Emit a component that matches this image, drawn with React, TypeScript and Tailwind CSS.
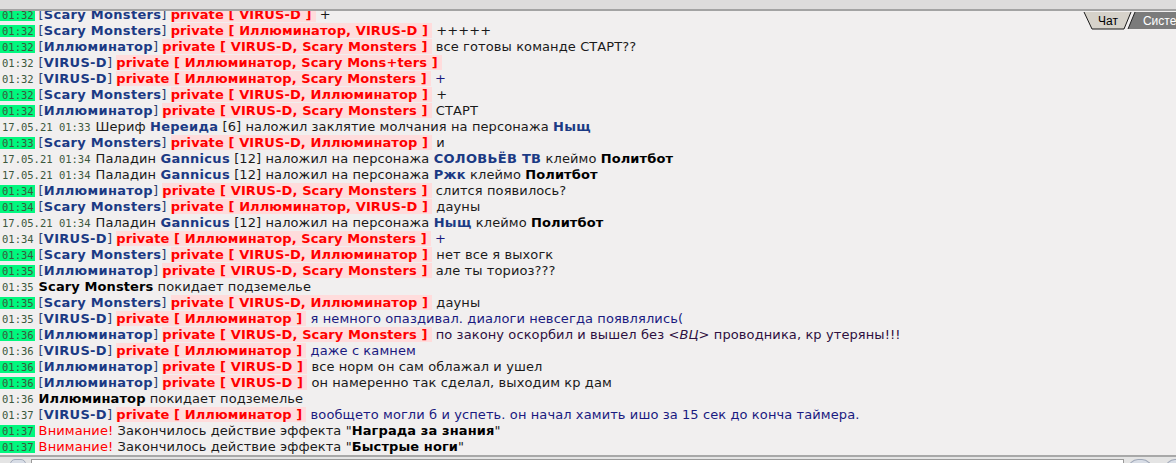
import React from "react";

type Part = { t: string; k?: "name" | "br" | "priv" | "msg" | "navy" | "purple" | "bold" | "red" | "it" | "plain" };
type Row = { time: string; hl?: boolean; date?: boolean; parts: Part[] };

const P = (who: string, to: string, msg: string, hl: boolean, time: string, k: Part["k"] = "msg"): Row => ({
  time,
  hl,
  parts: [
    { t: "[", k: "br" },
    { t: who, k: "name" },
    { t: "]", k: "br" },
    { t: " " },
    { t: `private [ ${to} ]`, k: "priv" },
    { t: " " },
    { t: msg, k },
  ],
});

const SM = "Scary Monsters";
const IL = "Иллюминатор";
const VD = "VIRUS-D";

const rows: Row[] = [
  P(SM, VD, "+", true, "01:32"),
  P(SM, `${IL}, ${VD}`, "+++++", true, "01:32"),
  P(IL, `${VD}, ${SM}`, "все готовы команде СТАРТ??", true, "01:32"),
  P(VD, `${IL}, Scary Mons+ters`, "", false, "01:32", "navy"),
  P(VD, `${IL}, ${SM}`, "+", false, "01:32", "navy"),
  P(SM, `${VD}, ${IL}`, "+", true, "01:32"),
  P(IL, `${VD}, ${SM}`, "СТАРТ", true, "01:32"),
  {
    time: "17.05.21 01:33",
    date: true,
    parts: [
      { t: "Шериф " },
      { t: "Нереида", k: "name" },
      { t: " [6] наложил заклятие молчания на персонажа " },
      { t: "Ныщ", k: "name" },
    ],
  },
  P(SM, `${VD}, ${IL}`, "и", true, "01:33"),
  {
    time: "17.05.21 01:34",
    date: true,
    parts: [
      { t: "Паладин " },
      { t: "Gannicus", k: "name" },
      { t: " [12] наложил на персонажа " },
      { t: "СОЛОВЬЁВ ТВ", k: "name" },
      { t: " клеймо " },
      { t: "Политбот", k: "bold" },
    ],
  },
  {
    time: "17.05.21 01:34",
    date: true,
    parts: [
      { t: "Паладин " },
      { t: "Gannicus", k: "name" },
      { t: " [12] наложил на персонажа " },
      { t: "Ржк", k: "name" },
      { t: " клеймо " },
      { t: "Политбот", k: "bold" },
    ],
  },
  P(IL, `${VD}, ${SM}`, "слится появилось?", true, "01:34"),
  P(SM, `${IL}, ${VD}`, "дауны", true, "01:34"),
  {
    time: "17.05.21 01:34",
    date: true,
    parts: [
      { t: "Паладин " },
      { t: "Gannicus", k: "name" },
      { t: " [12] наложил на персонажа " },
      { t: "Ныщ", k: "name" },
      { t: " клеймо " },
      { t: "Политбот", k: "bold" },
    ],
  },
  P(VD, `${IL}, ${SM}`, "+", false, "01:34", "navy"),
  P(SM, `${VD}, ${IL}`, "нет все я выхогк", true, "01:34"),
  P(IL, `${VD}, ${SM}`, "але ты ториоз???", true, "01:35"),
  { time: "01:35", parts: [{ t: SM, k: "bold" }, { t: " покидает подземелье" }] },
  P(SM, `${VD}, ${IL}`, "дауны", true, "01:35"),
  P(VD, IL, "я немного опаздивал. диалоги невсегда появлялись(", false, "01:35", "navy"),
  {
    time: "01:36",
    hl: true,
    parts: [
      { t: "[", k: "br" },
      { t: IL, k: "name" },
      { t: "]", k: "br" },
      { t: " " },
      { t: `private [ ${VD}, ${SM} ]`, k: "priv" },
      { t: " " },
      { t: "по закону оскорбил и вышел без ", k: "purple" },
      { t: "<ВЦ>", k: "it" },
      { t: " проводника, кр утеряны!!!", k: "purple" },
    ],
  },
  P(VD, IL, "даже с камнем", false, "01:36", "navy"),
  P(IL, VD, "все норм он сам облажал и ушел", true, "01:36"),
  P(IL, VD, "он намеренно так сделал, выходим кр дам", true, "01:36"),
  { time: "01:36", parts: [{ t: IL, k: "bold" }, { t: " покидает подземелье" }] },
  P(VD, IL, "вообщето могли б и успеть. он начал хамить ишо за 15 сек до конча таймера.", false, "01:37", "navy"),
  {
    time: "01:37",
    hl: true,
    parts: [
      { t: "Внимание!", k: "red" },
      { t: " Закончилось действие эффекта \"" },
      { t: "Награда за знания", k: "bold" },
      { t: "\"" },
    ],
  },
  {
    time: "01:37",
    hl: true,
    parts: [
      { t: "Внимание!", k: "red" },
      { t: " Закончилось действие эффекта \"" },
      { t: "Быстрые ноги", k: "bold" },
      { t: "\"" },
    ],
  },
];

function Piece({ p }: { p: Part }) {
  switch (p.k) {
    case "name":
      return <span className="font-bold text-[#1b3a84] tracking-[0.3px]">{p.t}</span>;
    case "br":
      return <span className="text-[#2c3e6e]">{p.t}</span>;
    case "priv":
      return <span className="bg-[#ffdcdc] font-bold text-[#ff0000] pr-[4px]">{p.t}</span>;
    case "navy":
      return <span className="text-[#1a1a80]">{p.t}</span>;
    case "purple":
      return <span className="text-[#2e1040]">{p.t}</span>;
    case "it":
      return <span className="italic text-[#2e1040]">{p.t}</span>;
    case "bold":
      return <span className="font-bold text-[#000000]">{p.t}</span>;
    case "red":
      return <span className="text-[#ff0000]">{p.t}</span>;
    default:
      return <span className="text-[#1a1a1a]">{p.t}</span>;
  }
}

function ChatRow({ r }: { r: Row }) {
  return (
    <div className="flex items-center h-[16px] leading-[16px] whitespace-nowrap gap-[4px]">
      <span
        className={
          "h-[12px] leading-[12px] pl-[2px] pr-[1px] text-[10.5px] text-[#3c583c] " +
          (r.hl ? "bg-[#00f87e]" : "")
        }
        style={{ fontFamily: '"DejaVu Sans Mono", monospace' }}
      >
        {r.time}
      </span>
      <span className="tracking-[0.1px]">
        {r.parts.map((p, i) => (
          <Piece key={i} p={p} />
        ))}
      </span>
    </div>
  );
}

export default function App() {
  return (
    <div
      className="relative flex flex-col w-[1176px] h-[463px] overflow-hidden bg-[#f1efef] text-[13px]"
      style={{ fontFamily: '"DejaVu Sans", Verdana, sans-serif' }}
    >
      <div className="h-[9px] shrink-0 bg-[#dddcdc]" />
      <div className="h-[2px] shrink-0 bg-[#a3a3a3]" />
      <div className="h-[444px] shrink-0 overflow-hidden">
        <div className="flex flex-col mt-[-4px]">
          {rows.map((r, i) => (
            <ChatRow key={i} r={r} />
          ))}
        </div>
      </div>
      <div className="h-[2px] shrink-0 bg-[#a8a8a8]" />
      <div className="flex items-start h-[6px] shrink-0 overflow-hidden bg-[#e4e4e4] pt-[2px] pl-[10px] gap-[4px]">
        <div className="w-[16px] h-[10px] shrink-0 rounded-full border border-[#a0a8b8] bg-[#d8dde6]" />
        <div className="ml-[1px] w-[1093px] h-[10px] shrink-0 border border-[#9a9a9a] bg-[#ffffff]" />
        <div className="w-[24px] h-[10px] shrink-0 rounded-t-full border border-[#a0a8b8] bg-[#d8dde6]" />
        <div className="ml-[9px] w-[20px] h-[10px] shrink-0 rounded-t-full border border-[#a0a8b8] bg-[#d8dde6]" />
      </div>

      {/* tabs overlaying the chat */}
      <div className="absolute right-0 top-[12px] w-[93px] h-[18px]">
        <svg width="93" height="18" className="absolute left-0 top-0">
          <polygon points="52,0 93,0 93,17 45,17" fill="#7b7b7b" />
          <polyline points="52,0 45,17" stroke="#222" strokeWidth="1" fill="none" />
          <polygon points="1,0 48,0 41,17 9,17" fill="#d6d2ca" />
          <polyline points="1,0 9,17 41,17 48,0" stroke="#1a1a1a" strokeWidth="1" fill="none" />
        </svg>
        <div
          className="relative flex h-[18px] items-center text-[12px] leading-[16px] whitespace-nowrap"
          style={{ fontFamily: '"Liberation Sans", Arial, sans-serif' }}
        >
          <span className="ml-[15px] text-black">Чат</span>
          <span className="ml-[25px] text-white">Система</span>
        </div>
      </div>
    </div>
  );
}
